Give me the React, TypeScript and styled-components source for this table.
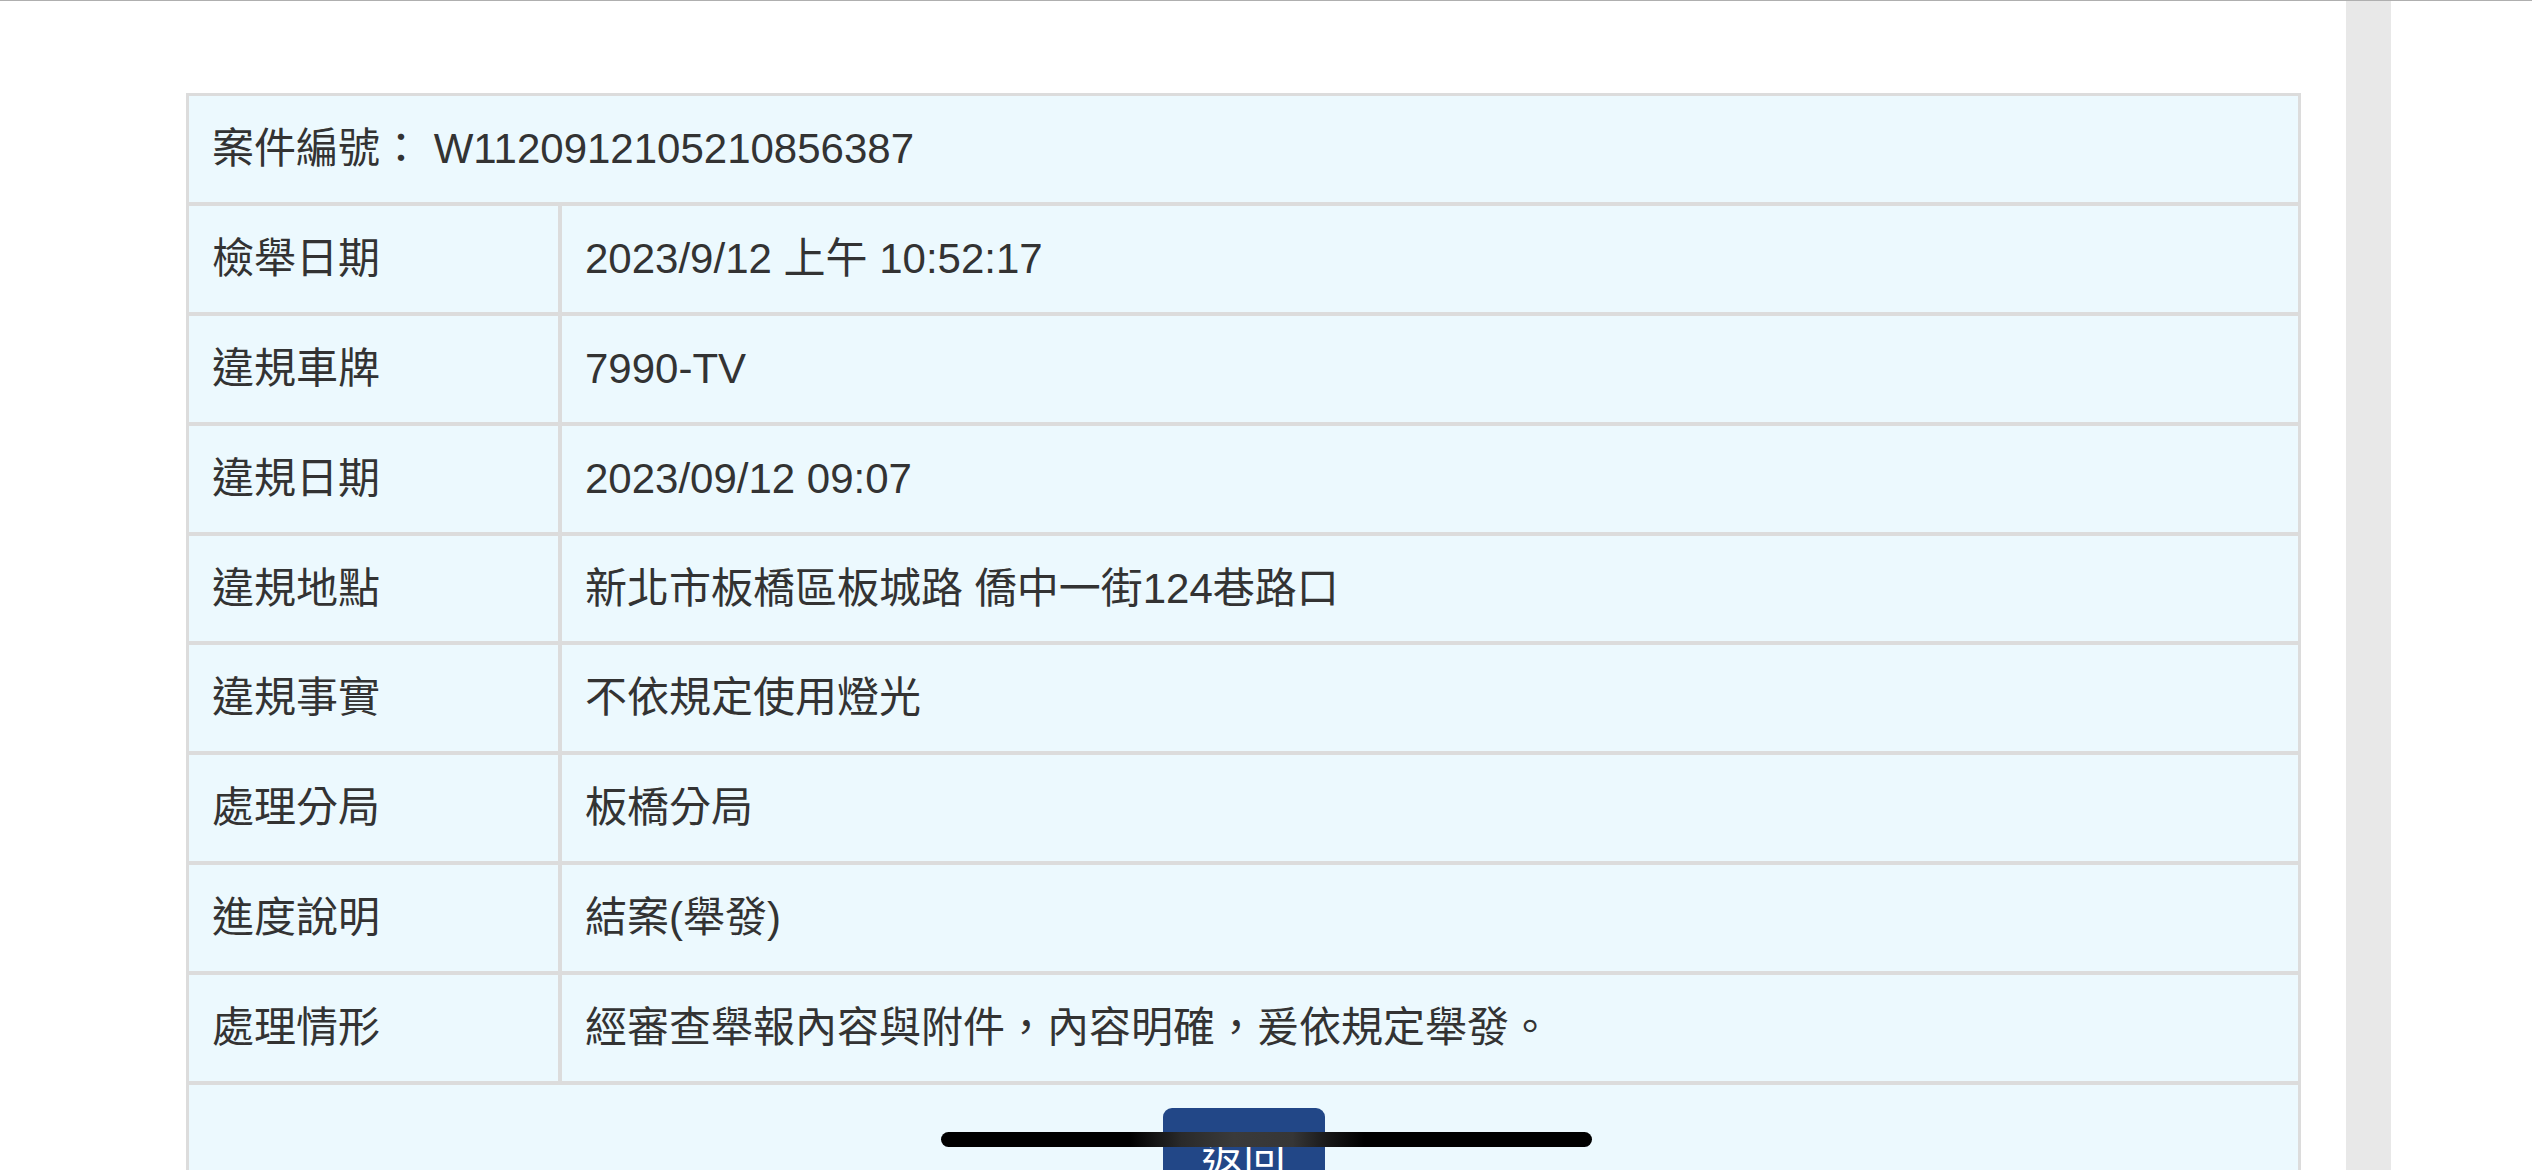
import React from "react";
import styled, { createGlobalStyle } from "styled-components";

const Global = createGlobalStyle`
  html, body {
    margin: 0;
    padding: 0;
    background: #ffffff;
    overflow: hidden;
  }
  body {
    font-family: "Liberation Sans", "Noto Sans CJK TC", sans-serif;
    color: #333333;
  }
`;

const Page = styled.div`
  position: relative;
  width: 2532px;
  height: 1170px;
  border-top: 1px solid #afafaf;
  box-sizing: border-box;
  display: flex;
  overflow: hidden;
`;

const Main = styled.main`
  width: 2346px;
  flex: none;
  padding: 92px 0 0 186px;
  box-sizing: border-box;
`;

const Side = styled.aside`
  width: 45px;
  flex: none;
  background: #e8e8e8;
`;

const Table = styled.div`
  width: 2115px;
  box-sizing: border-box;
  display: grid;
  grid-template-columns: 369px 1fr;
  grid-auto-rows: 105.9px;
  gap: 4px;
  padding: 3px;
  background: #dcdcdc;
`;

const Cell = styled.div<{ $span?: boolean; $center?: boolean }>`
  grid-column: ${(p) => (p.$span ? "1 / -1" : "auto")};
  background: #ecf9fe;
  display: flex;
  align-items: ${(p) => (p.$center ? "flex-start" : "center")};
  justify-content: ${(p) => (p.$center ? "center" : "flex-start")};
  padding: ${(p) => (p.$center ? "23px 0 0 0" : "0 24px 0 23px")};
  font-size: 42px;
  line-height: 1;
  white-space: nowrap;
  box-sizing: border-box;
`;

const Button = styled.button`
  font-family: "Liberation Sans", "Noto Sans CJK TC", sans-serif;
  font-size: 42px;
  line-height: 63px;
  color: #ffffff;
  background: #224787;
  border: none;
  border-radius: 9px;
  width: 162px;
  padding: 21px 0;
  cursor: pointer;
`;

const HomeBar = styled.div`
  position: absolute;
  left: 941px;
  top: 1131px;
  width: 651px;
  height: 15px;
  border-radius: 8px;
  background: linear-gradient(
    90deg,
    #000 0%,
    #000 29%,
    #2a2a2a 37%,
    #3a3a3a 45%,
    #363636 54%,
    #151515 60%,
    #000 65%,
    #000 100%
  );
`;

const rows: [string, string][] = [
  ["檢舉日期", "2023/9/12 上午 10:52:17"],
  ["違規車牌", "7990-TV"],
  ["違規日期", "2023/09/12 09:07"],
  ["違規地點", "新北市板橋區板城路 僑中一街124巷路口"],
  ["違規事實", "不依規定使用燈光"],
  ["處理分局", "板橋分局"],
  ["進度說明", "結案(舉發)"],
  ["處理情形", "經審查舉報內容與附件，內容明確，爰依規定舉發。"],
];

export default function App() {
  return (
    <>
      <Global />
      <Page>
        <Main>
          <Table>
            <Cell $span>案件編號： W1120912105210856387</Cell>
            {rows.map(([k, v]) => (
              <React.Fragment key={k}>
                <Cell>{k}</Cell>
                <Cell>{v}</Cell>
              </React.Fragment>
            ))}
            <Cell $span $center>
              <Button>返回</Button>
            </Cell>
          </Table>
        </Main>
        <Side />
        <HomeBar />
      </Page>
    </>
  );
}
